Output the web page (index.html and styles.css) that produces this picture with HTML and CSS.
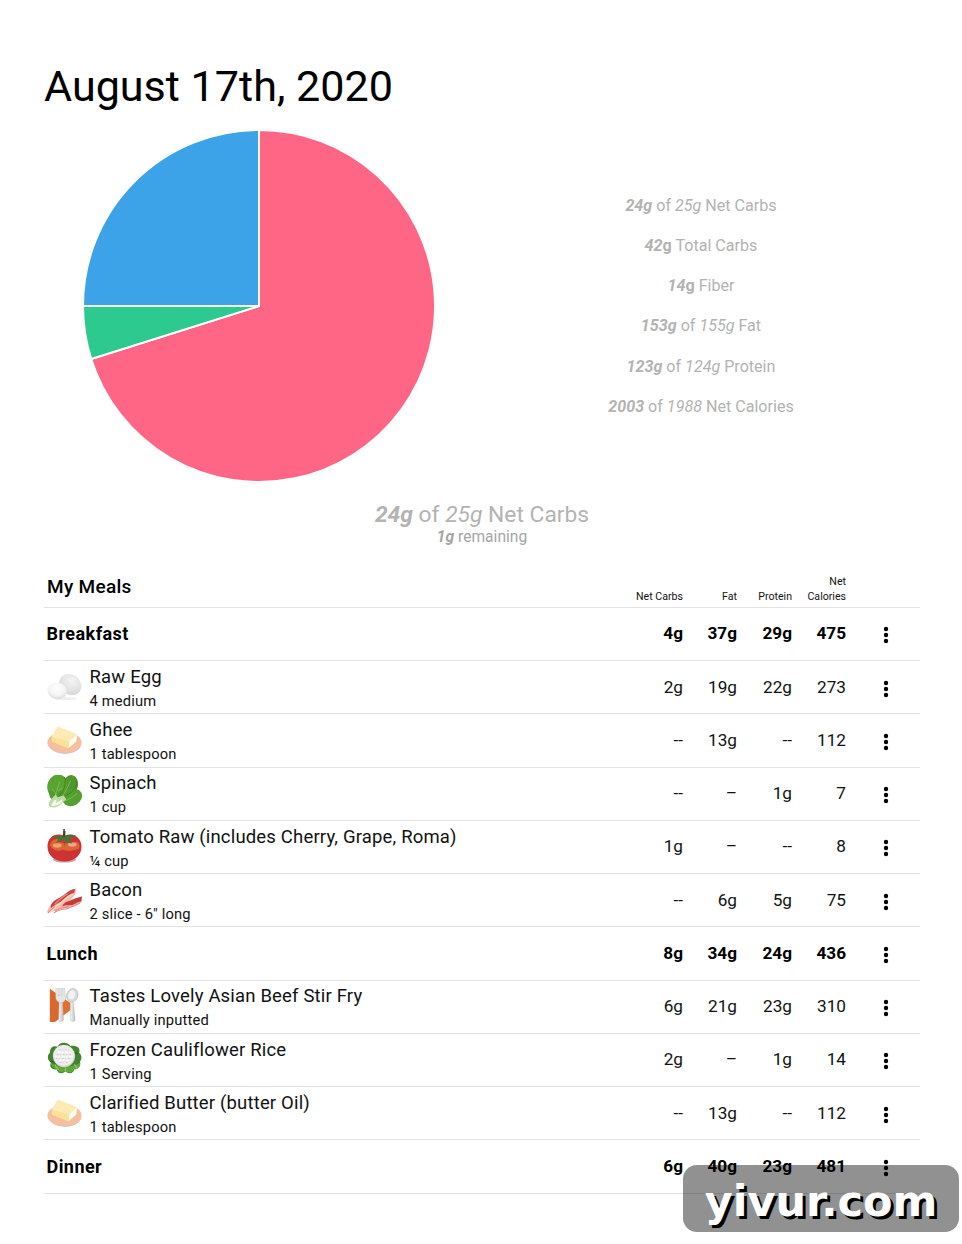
FILE: index.html
```html
<!DOCTYPE html>
<html lang="en">
<head>
  <meta charset="UTF-8" />
  <meta name="viewport" content="width=device-width, initial-scale=1.0"/>
  <title>My Meals</title>
  <link rel="stylesheet" href="styles.css">
</head>
<body>
  <!-- Food icons -->
  <svg class="icon-defs" width="0" height="0">
    <defs>
      <radialGradient id="shell" cx="45%" cy="30%" r="70%">
        <stop offset="0" stop-color="#f4f4f4"/>
        <stop offset="0.6" stop-color="#e4e4e4"/>
        <stop offset="1" stop-color="#d6d6d6"/>
      </radialGradient>
      <radialGradient id="shellFront" cx="45%" cy="35%" r="70%">
        <stop offset="0" stop-color="#ffffff"/>
        <stop offset="0.6" stop-color="#f4f4f4"/>
        <stop offset="1" stop-color="#d6d6d6"/>
      </radialGradient>
      <linearGradient id="steel" x1="0" x2="1">
        <stop offset="0" stop-color="#f6f6f6"/>
        <stop offset="1" stop-color="#bcbcbc"/>
      </linearGradient>
    </defs>
    <symbol id="egg" viewBox="0 -2 36 36">
      <ellipse cx="19" cy="28.5" rx="12" ry="1.6" fill="#efefef"/>
      <ellipse cx="24" cy="14" rx="12" ry="10.3" transform="rotate(35 24 14)" fill="url(#shell)"/>
      <ellipse cx="10.5" cy="20.5" rx="10" ry="8.6" transform="rotate(12 10.5 20.5)" fill="url(#shellFront)"/>
    </symbol>
    <symbol id="butter" viewBox="0 -1 36 36">
      <ellipse cx="18.5" cy="22" rx="16.5" ry="9.8" fill="#cdc6c2"/>
      <ellipse cx="18" cy="20" rx="17.6" ry="10.5" fill="#f7bf9f"/>
      <path d="M5 14.5 11 4 31 11.5 30 19 22 26 5 19z" fill="#f8e3a0"/>
      <path d="M5 14.5 11 4 31 11.5 23 19z" fill="#fcebb5"/>
      <path d="M23 19 31 11.5 30 19 22 26z" fill="#fffdf4"/>
      <path d="M5 14.5 23 19 22 26 5 19z" fill="#fae396"/>
    </symbol>
    <symbol id="spinach" viewBox="0 1 36 36">
      <ellipse cx="24" cy="11.5" rx="7.8" ry="10.5" transform="rotate(12 24 11.5)" fill="#4f972b"/>
      <ellipse cx="26" cy="24" rx="10.5" ry="8.5" transform="rotate(-30 26 24)" fill="#54a02e"/>
      <ellipse cx="10.5" cy="12" rx="10" ry="11.8" transform="rotate(22 10.5 12)" fill="#58a431"/>
      <path d="M2 17c0 7 2 9 5 11l13-1 2-10z" fill="#509b2b"/>
      <path d="M18 3c2 7 0 14-6 20M30 6c2 7-3 12-10 16" fill="none" stroke="#397f20" stroke-width=".9"/>
      <path d="M8 28c0-7 3-13 5-20M10 21l-5-6M11 18l5-4M14 27c3-7 7-11 10-20M17 28c5-1 9-4 14-8" fill="none" stroke="#9ac971" stroke-width=".6"/>
      <path d="M3 34c-2-2-1-5 1-8l5-5 2 3 6-2 3 4-5 4c-3 4-7 5-12 4z" fill="#bddaa3"/>
      <path d="M5 33c-1-3 2-6 5-7l-1 4 7-4c0 4-5 7-11 7z" fill="#f5f8ee"/>
    </symbol>
    <symbol id="tomato" viewBox="0 0 36 36">
      <ellipse cx="18" cy="31.5" rx="12" ry="3" fill="#c4a8a5"/>
      <path d="M18 7c9-4 17.5 2 17.5 11 0 10-8.5 15.5-17.5 15.500S.5 28 .5 18C.5 8 9 3 18 7z" fill="#cd3332"/>
      <path d="M3 17c1-6 6-8 12-6l-4 2 8 2 11-2c3 1 4 4 3 7-7 3-14 3-17 1-4 3-10 1-13-4z" fill="#de6434"/>
      <ellipse cx="10.5" cy="17" rx="4.5" ry="2.3" fill="#efa168"/>
      <ellipse cx="26" cy="16" rx="4.5" ry="2.2" fill="#f2a28f"/>
      <path d="M18 10 9 15l3-5-7-2c5-2 9-1 11 0l1-6h2l0 6c4-3 8-2 11-1l-7 3 3 5c-3 0-5-2-6-3l-2 6z" fill="#3d7a34"/>
      <path d="M17.5 0v8" stroke="#1d4a26" stroke-width="1.5" fill="none"/>
    </symbol>
    <symbol id="bacon" viewBox="0 -4 36 36">
      <path d="M0 27c3-9 7-11 13-15 6-3 8-8 17-9l-1 6-5 5 12-3v5c-7 6-11 6-16 7-6 0-10 2-19 5z" fill="#f2b8ae"/>
      <path d="M4 20c3-6 7-6 11-9 5-3 8-7 14-8l-1 4c-7 2-8 6-13 9-4 2-7 3-11 7z" fill="#c94643"/>
      <path d="M16 20c4-5 8-4 13-7l7-2-1 5c-6 1-7 4-12 4-3 0-5 0-7 1z" fill="#c63b3a"/>
      <path d="M3 27c5-6 9-7 13-11 3-3 6-6 11-7" fill="none" stroke="#f9d7b5" stroke-width="1.8"/>
      <path d="M8 19c5-6 9-8 13-11M8 26c6-4 9-3 14-5" fill="none" stroke="#e78b84" stroke-width="1.3"/>
      <path d="M1 28c3-4 6-5 7-7M7 28c6-5 13-3 17-6 5-1 7-4 10-4" fill="none" stroke="#e0827d" stroke-width="1"/>
    </symbol>
    <symbol id="cutlery" viewBox="0 1 36 36">
      <path d="M3 2 25 17v6L8 36H3z" fill="#e0702f"/>
      <path d="M3 2 14 10v21l-6 5H3z" fill="#d9682a"/>
      <path d="M12.5 15h3.5l1 19c0 2-5 2-5 0z" fill="url(#steel)" stroke="#b5b5b5" stroke-width=".4"/>
      <path d="M9 1v9c0 8 11 8 10 0l-1-9h-2v8h-1V1h-2v8h-1V1z" fill="#e6e6e6" stroke="#c2c2c2" stroke-width=".5"/>
      <path d="M24 14h3l2 20c0 2-5 2-5 0z" fill="url(#steel)" stroke="#b5b5b5" stroke-width=".4"/>
      <ellipse cx="26" cy="8.5" rx="5.8" ry="7.2" transform="rotate(20 26 8.5)" fill="#d9d9d9" stroke="#bdbdbd" stroke-width=".6"/>
      <ellipse cx="25.5" cy="8" rx="3.4" ry="4.8" transform="rotate(20 25.5 8)" fill="#f2f2f2"/>
    </symbol>
    <symbol id="cauliflower" viewBox="0 1 36 36">
      <path d="M11 6C12 1 21 0 24 5c6-1 11 2 9 7 4 3 2 8 1 9 1 6-3 8-6 8-1 5-6 5-9 2-3 3-8 3-9-2-5 1-8-2-6-7-5-3-3-9-1-10 0-5 3-8 8-6z" fill="#43842f"/>
      <path d="M4 22c0 4 3 7 7 7l2 3 6-1c3 3 8 1 9-2 4 0 7-3 6-7-6 5-24 7-30 0z" fill="#5ea83a"/>
      <path d="M11 7c3 1 1 4-1 4M32 13c-3-2-6 0-6 3M3 21c4 0 6 1 6 4" fill="none" stroke="#2d6423" stroke-width="1.3"/>
      <path d="M8 24l4 6M19 27v4M28 24l3 4" fill="none" stroke="#8cc766" stroke-width="1.3"/>
      <circle cx="17.5" cy="15.5" r="11.4" fill="#cfd3c9"/>
      <circle cx="17.2" cy="15" r="10.8" fill="#ededed"/>
      <path d="M10 14h15M12 9h11M9 18h16M13 22h9" fill="none" stroke="#d2d2d2" stroke-width="1.2" stroke-dasharray="2 1.3 1 2"/>
      <path d="M11 11.5h13M8 16h18M12 20h11" fill="none" stroke="#fff" stroke-width="1.5" stroke-dasharray="3 1 1.5 2"/>
    </symbol>
    <symbol id="dots" viewBox="0 0 6 18">
      <circle cx="3" cy="3" r="2.2"/>
      <circle cx="3" cy="9" r="2.2"/>
      <circle cx="3" cy="15" r="2.2"/>
    </symbol>
  </svg>

  <main class="page">
    <h1>August 17th, 2020</h1>

    <section class="summary">
      <svg class="pie" viewBox="0 0 352 352">
        <g stroke="#fff" stroke-width="2">
          <path d="M176 176V0A176 176 0 1 1 8.2 229z" fill="#ff6685"/>
          <path d="M176 176 8.2 229A176 176 0 0 1 0 176z" fill="#2dca8f"/>
          <path d="M176 176H0A176 176 0 0 1 176 0z" fill="#3da3e8"/>
        </g>
      </svg>
      <ul class="totals">
        <li><b><i>24g</i></b> of <i>25g</i> Net Carbs</li>
        <li><b><i>42</i>g</b> Total Carbs</li>
        <li><b><i>14</i>g</b> Fiber</li>
        <li><b><i>153g</i></b> of <i>155g</i> Fat</li>
        <li><b><i>123g</i></b> of <i>124g</i> Protein</li>
        <li><b><i>2003</i></b> of <i>1988</i> Net Calories</li>
      </ul>
    </section>

    <section class="carbs">
      <p class="carbs-main"><b><i>24g</i></b> of <i>25g</i> Net Carbs</p>
      <p class="carbs-left"><b><i>1g</i></b> remaining</p>
    </section>

    <section class="meals">
      <div class="row head">
        <h2>My Meals</h2>
        <span>Net Carbs</span><span>Fat</span><span>Protein</span><span>Net<br>Calories</span>
      </div>
      <div class="row meal">
        <h3>Breakfast</h3>
        <span>4g</span><span>37g</span><span>29g</span><span>475</span>
        <svg class="dots"><use href="#dots"/></svg>
      </div>
      <div class="row">
        <div class="food"><svg><use href="#egg"/></svg><div><p class="name">Raw Egg</p><p class="amount">4 medium</p></div></div>
        <span>2g</span><span>19g</span><span>22g</span><span>273</span>
        <svg class="dots"><use href="#dots"/></svg>
      </div>
      <div class="row">
        <div class="food"><svg><use href="#butter"/></svg><div><p class="name">Ghee</p><p class="amount">1 tablespoon</p></div></div>
        <span>--</span><span>13g</span><span>--</span><span>112</span>
        <svg class="dots"><use href="#dots"/></svg>
      </div>
      <div class="row">
        <div class="food"><svg><use href="#spinach"/></svg><div><p class="name">Spinach</p><p class="amount">1 cup</p></div></div>
        <span>--</span><span>–</span><span>1g</span><span>7</span>
        <svg class="dots"><use href="#dots"/></svg>
      </div>
      <div class="row">
        <div class="food"><svg><use href="#tomato"/></svg><div><p class="name">Tomato Raw (includes Cherry, Grape, Roma)</p><p class="amount">¼ cup</p></div></div>
        <span>1g</span><span>–</span><span>--</span><span>8</span>
        <svg class="dots"><use href="#dots"/></svg>
      </div>
      <div class="row">
        <div class="food"><svg><use href="#bacon"/></svg><div><p class="name">Bacon</p><p class="amount">2 slice - 6" long</p></div></div>
        <span>--</span><span>6g</span><span>5g</span><span>75</span>
        <svg class="dots"><use href="#dots"/></svg>
      </div>
      <div class="row meal">
        <h3>Lunch</h3>
        <span>8g</span><span>34g</span><span>24g</span><span>436</span>
        <svg class="dots"><use href="#dots"/></svg>
      </div>
      <div class="row">
        <div class="food"><svg><use href="#cutlery"/></svg><div><p class="name">Tastes Lovely Asian Beef Stir Fry</p><p class="amount">Manually inputted</p></div></div>
        <span>6g</span><span>21g</span><span>23g</span><span>310</span>
        <svg class="dots"><use href="#dots"/></svg>
      </div>
      <div class="row">
        <div class="food"><svg><use href="#cauliflower"/></svg><div><p class="name">Frozen Cauliflower Rice</p><p class="amount">1 Serving</p></div></div>
        <span>2g</span><span>–</span><span>1g</span><span>14</span>
        <svg class="dots"><use href="#dots"/></svg>
      </div>
      <div class="row">
        <div class="food"><svg><use href="#butter"/></svg><div><p class="name">Clarified Butter (butter Oil)</p><p class="amount">1 tablespoon</p></div></div>
        <span>--</span><span>13g</span><span>--</span><span>112</span>
        <svg class="dots"><use href="#dots"/></svg>
      </div>
      <div class="row meal">
        <h3>Dinner</h3>
        <span>6g</span><span>40g</span><span>23g</span><span>481</span>
        <svg class="dots"><use href="#dots"/></svg>
      </div>
    </section>
  </main>

  <div class="watermark">yivur.com</div>
</body>
</html>
```
FILE: styles.css
```css
body {
  margin: 0;
  position: relative;
  height: 1244px;
  overflow: hidden;
  background-color: #fff;
  color: #111;
  font-family: Roboto, sans-serif;
}

h1, h2, h3, p, ul {
  margin: 0;
  padding: 0;
}

.icon-defs {
  position: absolute;
}

.page {
  padding: 61px 42px 0 44px;
}

h1 {
  font-size: 43.1px;
  font-weight: 400;
  line-height: 52px;
  color: #000;
}

.summary {
  display: grid;
  grid-template-columns: 438px 438px;
  height: 352px;
  margin-top: 16.5px;
}

.pie {
  width: 352px;
  height: 352px;
  margin-left: 39px;
}

.totals {
  list-style: none;
  padding-top: 66px;
  text-align: center;
  font-size: 16.1px;
  line-height: 20px;
  color: #b3b3b3;
}

.totals li {
  margin-bottom: 20.3px;
}

.carbs {
  margin-top: 18px;
  text-align: center;
  color: #b3b3b3;
}

.carbs-main {
  font-size: 22.8px;
  line-height: 30px;
}

.carbs-left {
  font-size: 15.6px;
  line-height: 15px;
  color: #a5a5a5;
}

.meals {
  margin-top: 22px;
}

.row {
  display: grid;
  grid-template-columns: 1fr 54px 54px 55px 54px 74px;
  align-items: center;
  box-sizing: border-box;
  height: 53.25px;
  border-bottom: 1px solid #e2e2e2;
}

.row span {
  padding-bottom: 1px;
  text-align: right;
  font-size: 17.2px;
}

.row h2,
.row h3 {
  padding-left: 3px;
  font-weight: 500;
  color: #000;
}

.row h2 {
  font-size: 19px;
  letter-spacing: 0.3px;
  padding-bottom: 1px;
}

.row h3 {
  padding-left: 2.5px;
  font-size: 18px;
  font-weight: 700;
  letter-spacing: 0.45px;
}

.row.head {
  height: 41.3px;
}

.row.head span {
  align-self: end;
  padding-bottom: 3px;
  font-size: 10.6px;
  line-height: 15px;
  white-space: nowrap;
}

.row.meal span {
  font-weight: 700;
  color: #000;
}

.food {
  display: flex;
  gap: 7.5px;
  padding-left: 3px;
  padding-top: 2.5px;
}

.food svg {
  width: 35px;
  height: 35px;
  margin-top: 4px;
}

.name {
  font-size: 18.5px;
  line-height: 25px;
  letter-spacing: 0.17px;
}

.amount {
  font-size: 14.7px;
  line-height: 22px;
  letter-spacing: 0.17px;
}

.dots {
  width: 6px;
  height: 18px;
  justify-self: center;
  margin-top: 3px;
  margin-left: 5px;
}

.watermark {
  position: absolute;
  right: 3px;
  bottom: 12px;
  width: 276px;
  height: 67px;
  box-sizing: border-box;
  border-radius: 14px;
  background-color: rgba(0, 0, 0, 0.43);
  color: #fff;
  font: bold 43px/72px "DejaVu Sans", sans-serif;
  text-align: center;
  text-shadow: 3px 3px 0 #000;
}
```
